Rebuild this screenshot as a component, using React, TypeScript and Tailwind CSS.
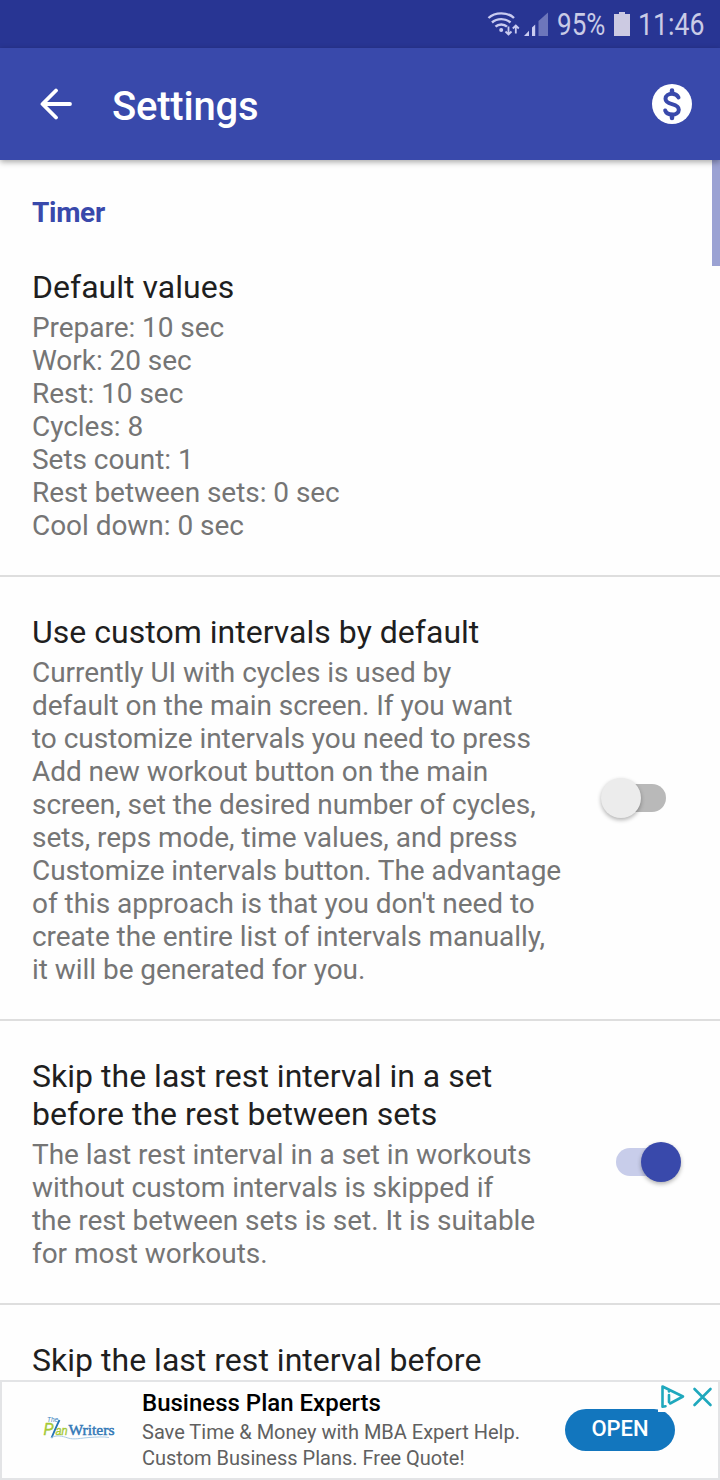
import React from 'react';

interface Setting {
    title: string[];
    summary: string[];
    checked?: boolean;
}

const SETTINGS: Setting[] = [
    {
        title: ['Default values'],
        summary: [
            'Prepare: 10 sec',
            'Work: 20 sec',
            'Rest: 10 sec',
            'Cycles: 8',
            'Sets count: 1',
            'Rest between sets: 0 sec',
            'Cool down: 0 sec',
        ],
    },
    {
        title: ['Use custom intervals by default'],
        summary: [
            'Currently UI with cycles is used by',
            'default on the main screen. If you want',
            'to customize intervals you need to press',
            'Add new workout button on the main',
            'screen, set the desired number of cycles,',
            'sets, reps mode, time values, and press',
            'Customize intervals button. The advantage',
            "of this approach is that you don't need to",
            'create the entire list of intervals manually,',
            'it will be generated for you.',
        ],
        checked: false,
    },
    {
        title: ['Skip the last rest interval in a set', 'before the rest between sets'],
        summary: [
            'The last rest interval in a set in workouts',
            'without custom intervals is skipped if',
            'the rest between sets is set. It is suitable',
            'for most workouts.',
        ],
        checked: true,
    },
    {
        title: ['Skip the last rest interval before'],
        summary: [],
    },
];

const StatusBar: React.FC = () => (
    <div className="h-12 bg-[#283593] flex items-center justify-end pr-[15px] text-[#c9cbe6]">
        <svg width="64" height="28" viewBox="0 0 64 28" className="mr-2" fill="none">
            <g stroke="#c9cbf0" strokeWidth="2.4">
                <path d="M3.500 8C10 1.800 22.500 1.800 29 8" />
                <path d="M7 12.500C12 8 20.500 8 25.500 12.500" />
                <path d="M10.500 16.700C13.500 13.700 19 13.700 22 16.700" />
            </g>
            <circle cx="16.200" cy="20" r="2" fill="#c9cbf0" />
            <path d="M23.500 16.500V24.500M20.500 21.500L23.500 24.500L26.500 21.500" stroke="#c9cbf0" strokeWidth="1.800" />
            <path d="M30.800 23.500V15.500M27.800 18.500L30.800 15.500L33.800 18.500" stroke="#c9cbf0" strokeWidth="1.800" />
            <path d="M39 26L44 20.800V26Z" fill="#c9cbf0" />
            <path d="M47 17.500L50.200 14.500V26H47Z" fill="#c9cbf0" />
            <path d="M53.500 11L63 2.500V26H53.500Z" fill="#6d76bb" />
        </svg>
        <span className="w-[49px] whitespace-nowrap">
            <span className="relative top-px inline-block origin-left scale-x-[0.84] text-[31px] leading-none">95%</span>
        </span>
        <svg width="16" height="24" viewBox="0 0 16 24" className="ml-2 mr-2" fill="#cccae2">
            <path d="M5 0H11V2H16V24H0V2H5Z" />
        </svg>
        <span className="w-[67px] whitespace-nowrap">
            <span className="relative top-px inline-block origin-left scale-x-[0.86] text-[31px] leading-none">11:46</span>
        </span>
    </div>
);

const AppBar: React.FC = () => (
    <header className="relative z-10 h-28 bg-[#3949ab] flex items-center pl-10 pr-7 text-white shadow-[0_2px_6px_rgba(0,0,0,0.35)]">
        <svg width="32" height="32" viewBox="0 0 32 32" fill="none" stroke="currentColor" strokeWidth="3.8" strokeLinecap="round" strokeLinejoin="round">
            <path d="M30 16H3M16 2.500L2.500 16L16 29.500" />
        </svg>
        <h1 className="ml-10 mt-1.5 text-[40px] font-medium leading-none tracking-[-0.2px]">Settings</h1>
        <svg width="40" height="40" viewBox="0 0 40 40" className="ml-auto" fill="none">
            <circle cx="20" cy="20" r="20" fill="currentColor" />
            <g stroke="#3949ab" strokeWidth="4" strokeLinecap="round">
                <path d="M26.500 13.500C25.300 10.800 22.800 9.800 20 9.800C16.500 9.800 13.500 11.500 13.500 14.700C13.500 18 16.500 19.200 20 20.200C23.800 21.200 26.800 22.500 26.800 25.700C26.800 28.800 23.800 30.500 20.300 30.500C17 30.500 14.200 29.300 13.200 26.500" />
                <path d="M20 6.500V9M20 31V34" strokeWidth="4.500" />
            </g>
        </svg>
    </header>
);

const Toggle: React.FC<{ checked: boolean }> = ({ checked }) =>
    checked ? (
        <div className="mb-[3px] flex h-10 w-[65px] items-center justify-end">
            <div className="-mr-6 h-7 w-[49px] rounded-full bg-[#c8cdea]" />
            <div className="z-10 size-10 rounded-full bg-[#3949ab] shadow-[0_2px_4px_rgba(0,0,0,0.3)]" />
        </div>
    ) : (
        <div className="mb-[3px] mr-[15px] flex h-10 w-[65px] items-center">
            <div className="z-10 size-10 shrink-0 rounded-full bg-[#ececec] shadow-[0_2px_4px_rgba(0,0,0,0.3)]" />
            <div className="-ml-6 h-7 w-[49px] rounded-full bg-[#b9b9b9]" />
        </div>
    );

const SettingRow: React.FC<{ setting: Setting }> = ({ setting }) => (
    <div className="flex items-center justify-between border-b-2 border-[#dedede] pt-9 pb-[33px] pl-8 pr-[39px] whitespace-nowrap">
        <div>
            <h2 className="text-[32px] leading-[38px] tracking-[0.02px] text-[#1f1f1f]">
                {setting.title.map((line) => (
                    <span key={line} className="block">{line}</span>
                ))}
            </h2>
            <p className="mt-[5px] text-[28px] leading-[33px] tracking-[-0.045px] text-[#757575]">
                {setting.summary.map((line) => (
                    <span key={line} className="block">{line}</span>
                ))}
            </p>
        </div>
        {setting.checked !== undefined && <Toggle checked={setting.checked} />}
    </div>
);

const PlanWritersLogo: React.FC = () => (
    <svg width="76" height="28" viewBox="0 0 76 28">
        <text x="4" y="6" fontFamily="Liberation Sans" fontSize="6.500" fontStyle="italic" fill="#3b82bd">The</text>
        <text x="0.500" y="19" fontFamily="Liberation Sans" fontSize="16" fontStyle="italic" fill="#a5c935" stroke="#a5c935" strokeWidth="0.400" textLength="10" lengthAdjust="spacingAndGlyphs">P</text>
        <text x="12.500" y="19" fontFamily="Liberation Sans" fontSize="13" fontStyle="italic" fill="#a5c935" stroke="#a5c935" strokeWidth="0.400" textLength="12" lengthAdjust="spacingAndGlyphs">an</text>
        <path d="M16.500 4C14 9 11 16 8.500 22" stroke="#2475b5" strokeWidth="1.800" fill="none" />
        <text x="25.500" y="19" fontFamily="Liberation Serif" fontSize="15" fill="#3479b7" stroke="#3479b7" strokeWidth="0.500" textLength="46" lengthAdjust="spacingAndGlyphs">Writers</text>
        <path d="M8 22C13 18.500 19 20 25 22S38 22 46 21.500S60 20.500 66 21.500" stroke="#a9cbe6" strokeWidth="1" fill="none" />
    </svg>
);

const AdBanner: React.FC = () => (
    <div className="relative flex h-[100px] border-2 border-[#e3e4e6] bg-[#fefefe]">
        <div className="flex w-[140px] items-center pl-[41px]">
            <PlanWritersLogo />
        </div>
        <div className="whitespace-nowrap pt-[6px]">
            <div className="text-[24px] font-medium leading-[30px] text-black">Business Plan Experts</div>
            <div className="mt-px text-[20px] leading-[26px] text-[#606060]">
                Save Time &amp; Money with MBA Expert Help.
                <br />
                Custom Business Plans. Free Quote!
            </div>
        </div>
        <button className="absolute left-[563px] top-[27px] h-[42px] w-[110px] rounded-full bg-[#1276be] pb-[3px] text-[22px] font-medium text-white">
            OPEN
        </button>
        <svg className="absolute right-0 top-0" width="60" height="30" viewBox="2 0 60 30" fill="none">
            <path d="M0 0H62V30H0Z" fill="#fefefe" />
            <g stroke="#1fa8bd" strokeWidth="2.600" strokeLinejoin="round" strokeLinecap="round">
                <path d="M9.500 24.300L6.500 24.800V4.500L27 14.500L14 21.500" />
                <path d="M13 13V20" />
                <path d="M13 9.300V9.400" />
                <path d="M38.500 7L54.500 23M54.500 7L38.500 23" />
            </g>
        </svg>
    </div>
);

const App: React.FC = () => (
    <div className="flex h-[1480px] w-[720px] flex-col overflow-hidden bg-[#fefefe] font-['Roboto',sans-serif]">
        <StatusBar />
        <AppBar />
        <main className="relative min-h-0 flex-1 overflow-hidden">
            <div className="absolute right-0 top-0 h-[106px] w-2 bg-[#9ba2d3]" />
            <h3 className="h-[72px] pl-8 pt-9 text-[28px] font-bold leading-[33px] tracking-[-0.3px] text-[#3949ab]">Timer</h3>
            {SETTINGS.map((setting) => (
                <SettingRow key={setting.title[0]} setting={setting} />
            ))}
        </main>
        <AdBanner />
    </div>
);

export default App;
